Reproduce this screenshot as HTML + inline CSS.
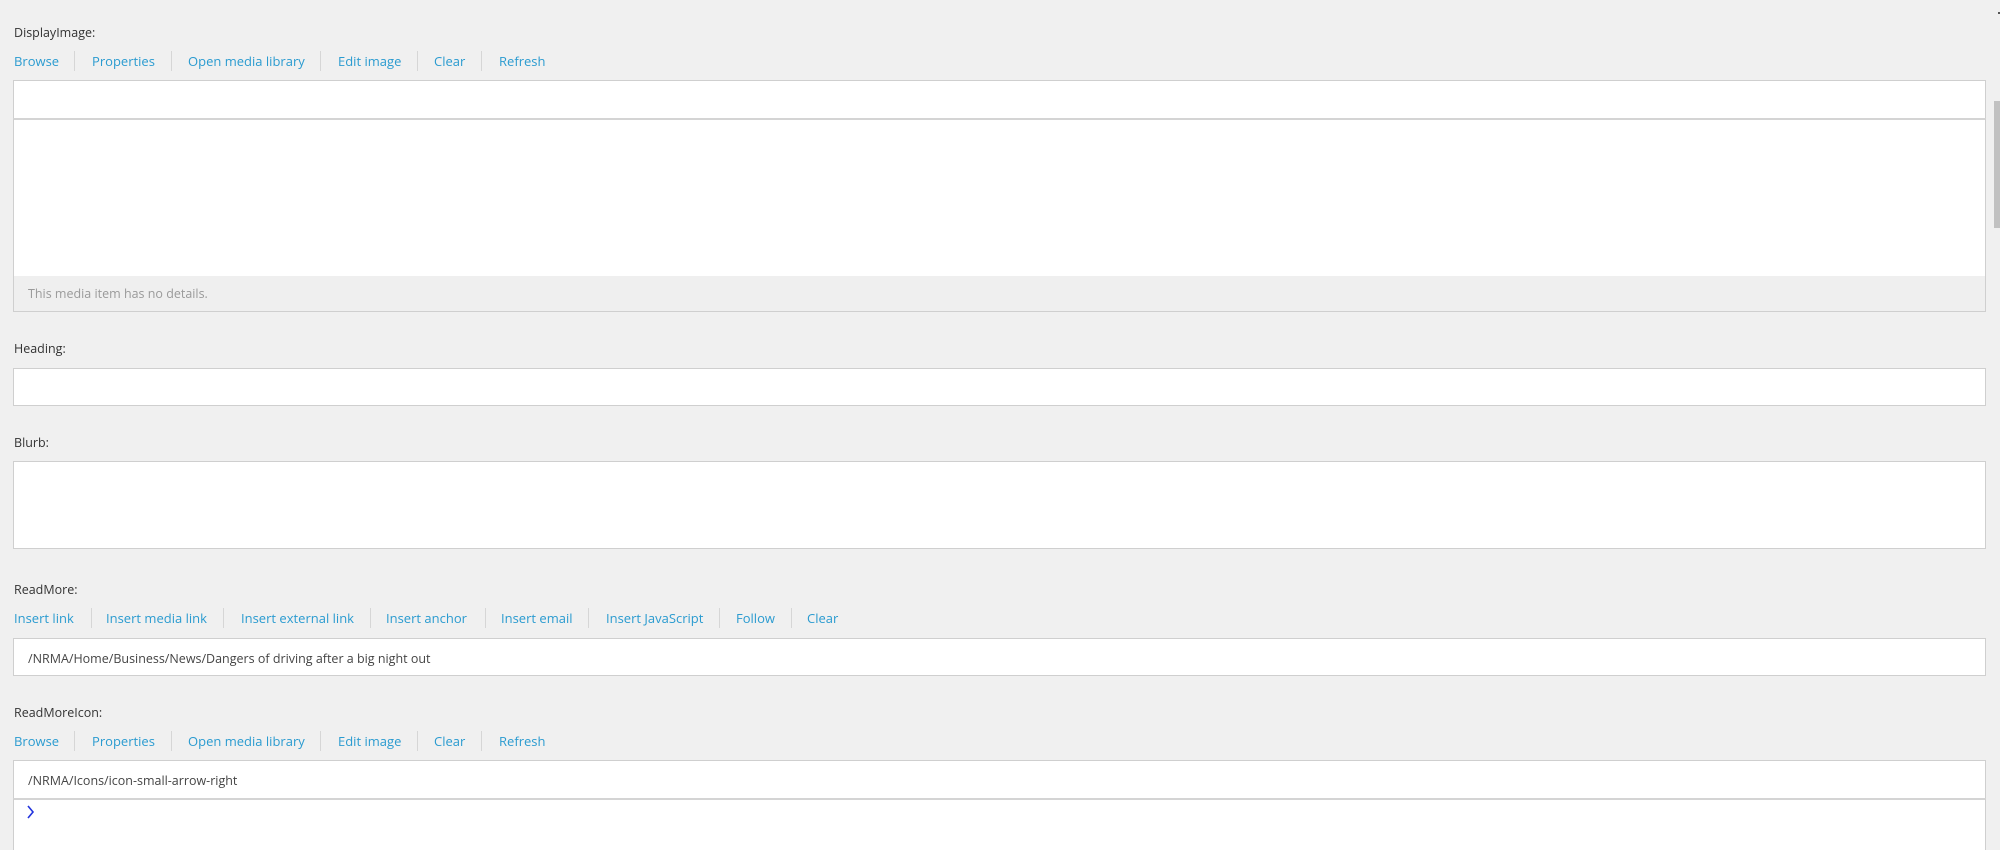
<!DOCTYPE html>
<html><head><meta charset="utf-8"><style>
html,body{margin:0;width:2000px;height:850px;overflow:hidden}
body{background:#f0f0f0;font-family:"Open Sans","Liberation Sans",sans-serif;font-size:13px;color:#333;position:relative}
.a{position:absolute;white-space:nowrap}
.l{position:absolute;color:#2a9bd0;white-space:nowrap;line-height:16px}
.s{position:absolute;width:1px;height:20px;background:#d6d6d6}
.box{position:absolute;left:13px;width:1973px;background:#fff;border:1px solid #cfcfcf;box-sizing:border-box}
</style></head><body>
<div class="a" style="left:14px;top:24px;font-size:12.5px">DisplayImage:</div>
<div class="l" style="left:14px;top:53px">Browse</div><div class="s" style="left:74px;top:51px"></div>
<div class="l" style="left:92px;top:53px">Properties</div><div class="s" style="left:171px;top:51px"></div>
<div class="l" style="left:188px;top:53px">Open media library</div><div class="s" style="left:320px;top:51px"></div>
<div class="l" style="left:338px;top:53px">Edit image</div><div class="s" style="left:417px;top:51px"></div>
<div class="l" style="left:434px;top:53px">Clear</div><div class="s" style="left:481px;top:51px"></div>
<div class="l" style="left:499px;top:53px">Refresh</div>
<div class="box" style="top:80px;height:39px"></div>
<div class="box" style="top:118px;height:194px;border-top:2px solid #d4d4d4"></div>
<div class="a" style="left:14px;top:276px;width:1971px;height:35px;background:#efefef"></div>
<div class="a" style="left:28px;top:285px;color:#9a9a9a;font-size:12.5px">This media item has no details.</div>
<div style="position:absolute;left:1994px;top:101px;width:6px;height:127px;background:#c1c1c1"></div>
<div style="position:absolute;left:1998px;top:12px;width:2px;height:2px;background:#555"></div>

<div class="a" style="left:14px;top:340px;font-size:12.5px">Heading:</div>
<div class="box" style="top:368px;height:38px"></div>
<div class="a" style="left:14px;top:434px;font-size:12.5px">Blurb:</div>
<div class="box" style="top:461px;height:88px"></div>

<div class="a" style="left:14px;top:581px;font-size:12.5px">ReadMore:</div>
<div class="l" style="left:14px;top:610px">Insert link</div><div class="s" style="left:91px;top:608px"></div>
<div class="l" style="left:106px;top:610px">Insert media link</div><div class="s" style="left:223px;top:608px"></div>
<div class="l" style="left:241px;top:610px">Insert external link</div><div class="s" style="left:370px;top:608px"></div>
<div class="l" style="left:386px;top:610px">Insert anchor</div><div class="s" style="left:485px;top:608px"></div>
<div class="l" style="left:501px;top:610px">Insert email</div><div class="s" style="left:588px;top:608px"></div>
<div class="l" style="left:606px;top:610px">Insert JavaScript</div><div class="s" style="left:719px;top:608px"></div>
<div class="l" style="left:736px;top:610px">Follow</div><div class="s" style="left:791px;top:608px"></div>
<div class="l" style="left:807px;top:610px">Clear</div>
<div class="box" style="top:638px;height:38px"></div>
<div class="a" style="left:28px;top:650px;font-size:12.5px;color:#444">/NRMA/Home/Business/News/Dangers of driving after a big night out</div>

<div class="a" style="left:14px;top:704px;font-size:12.5px">ReadMoreIcon:</div>
<div class="l" style="left:14px;top:733px">Browse</div><div class="s" style="left:74px;top:731px"></div>
<div class="l" style="left:92px;top:733px">Properties</div><div class="s" style="left:171px;top:731px"></div>
<div class="l" style="left:188px;top:733px">Open media library</div><div class="s" style="left:320px;top:731px"></div>
<div class="l" style="left:338px;top:733px">Edit image</div><div class="s" style="left:417px;top:731px"></div>
<div class="l" style="left:434px;top:733px">Clear</div><div class="s" style="left:481px;top:731px"></div>
<div class="l" style="left:499px;top:733px">Refresh</div>
<div class="box" style="top:760px;height:39px"></div>
<div class="a" style="left:28px;top:772px;font-size:12.5px;color:#444">/NRMA/Icons/icon-small-arrow-right</div>
<div class="box" style="top:798px;height:52px;border-top:2px solid #d4d4d4;border-bottom:none"></div>
<svg style="position:absolute;left:26px;top:805px" width="10" height="14"><path d="M2 1 L7 7 L2 13" fill="none" stroke="#2233dd" stroke-width="1.6"/></svg>
</body></html>
